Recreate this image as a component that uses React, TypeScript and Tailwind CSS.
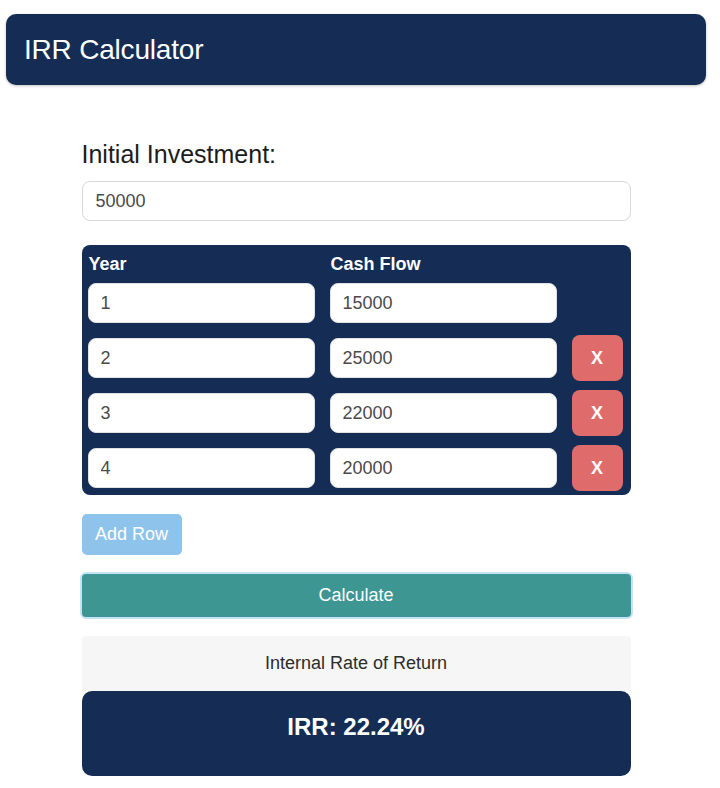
import React, { useState } from 'react';

interface CashRow {
  id: number;
  year: string;
  flow: string;
}

const initialRows: CashRow[] = [
  { id: 1, year: '1', flow: '15000' },
  { id: 2, year: '2', flow: '25000' },
  { id: 3, year: '3', flow: '22000' },
  { id: 4, year: '4', flow: '20000' },
];

export default function App() {
  const [investment, setInvestment] = useState('50000');
  const [rows, setRows] = useState<CashRow[]>(initialRows);

  const updateRow = (id: number, key: 'year' | 'flow', value: string) => {
    setRows((prev) => prev.map((r) => (r.id === id ? { ...r, [key]: value } : r)));
  };

  return (
    <div className="min-h-screen bg-white pt-[14px] pl-[6px] pr-[14px] font-['Liberation_Sans',Arial,sans-serif]">
      {/* Header */}
      <div className="h-[71px] rounded-[10px] bg-[#152d55] flex items-center pl-[18px] shadow-[0_1px_3px_rgba(0,0,0,0.25)]">
        <h1 className="text-[28px] text-white tracking-[-0.2px]">IRR Calculator</h1>
      </div>

      <div className="w-[549px] mx-auto mt-[55px]">
        <label className="block text-[25px] leading-[28px] text-[#1c1c1c]">Initial Investment:</label>
        <input
          value={investment}
          onChange={(e) => setInvestment(e.target.value)}
          className="mt-[13px] w-full h-[40px] rounded-[8px] border border-[#d8d8d8] px-[13px] text-[18px] text-[#4a4a4a] outline-none"
        />

        {/* Cash flow table */}
        <div className="mt-[24px] rounded-[8px] bg-[#152d55] pl-[6px] pr-[8px] pt-[6px] pb-[4px]">
          <div className="grid grid-cols-[227px_227px_51px] gap-x-[15px] h-[24px] items-center text-[18px] font-bold text-white">
            <div className="pl-[1px]">Year</div>
            <div className="pl-[1px]">Cash Flow</div>
            <div />
          </div>
          <div className="mt-[5px] flex flex-col gap-[9px]">
            {rows.map((row, i) => (
              <div key={row.id} className="grid grid-cols-[227px_227px_51px] gap-x-[15px] h-[46px] items-center">
                <input
                  value={row.year}
                  onChange={(e) => updateRow(row.id, 'year', e.target.value)}
                  className="h-[40px] rounded-[8px] bg-white border border-[#e2e2e2] px-[12px] text-[18px] text-[#4a4a4a] outline-none"
                />
                <input
                  value={row.flow}
                  onChange={(e) => updateRow(row.id, 'flow', e.target.value)}
                  className="h-[40px] rounded-[8px] bg-white border border-[#e2e2e2] px-[12px] text-[18px] text-[#4a4a4a] outline-none"
                />
                {i > 0 ? (
                  <button
                    onClick={() => setRows((prev) => prev.filter((r) => r.id !== row.id))}
                    className="h-[46px] rounded-[8px] bg-[#e06b6b] text-white text-[18px] font-bold"
                  >
                    X
                  </button>
                ) : (
                  <div />
                )}
              </div>
            ))}
          </div>
        </div>

        <button
          onClick={() =>
            setRows((prev) => [...prev, { id: Date.now(), year: String(prev.length + 1), flow: '' }])
          }
          className="mt-[19px] w-[100px] h-[41px] rounded-[5px] bg-[#8ec4ec] text-white text-[18px]"
        >
          Add Row
        </button>

        <button className="mt-[19px] block w-full h-[43px] rounded-[4px] bg-[#3d9691] text-white text-[18px] ring-2 ring-[#c4e3f5]">
          Calculate
        </button>

        <div className="mt-[19px] h-[55px] bg-[#f6f6f6] rounded-t-[4px] flex items-center justify-center text-[18px] text-[#2c2c2c]">
          Internal Rate of Return
        </div>
        <div className="h-[85px] rounded-[10px] bg-[#152d55] flex justify-center pt-[21px]">
          <span className="text-[24px] leading-[30px] font-bold text-white">IRR: 22.24%</span>
        </div>
      </div>
    </div>
  );
}
